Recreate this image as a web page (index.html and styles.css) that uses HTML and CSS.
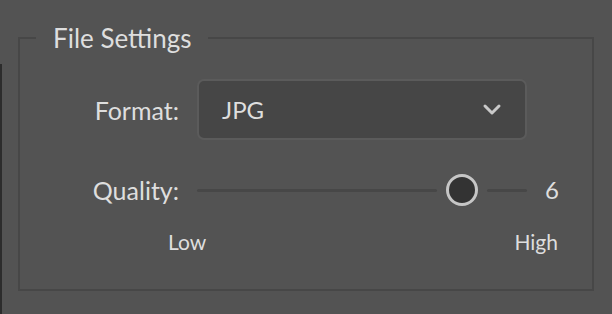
FILE: index.html
```html
<!DOCTYPE html>
<html lang="en">
<head>
    <meta charset="UTF-8">
    <meta name="viewport" content="width=device-width, initial-scale=1.0">
    <title>File Settings</title>
    <link rel="stylesheet" href="styles.css">
</head>
<body>

    <div class="edge"></div>

    <fieldset class="settings">
        <legend>File Settings</legend>

        <div class="rows">
            <div class="row row-format">
                <label class="label">Format:</label>
                <div class="select">
                    <span>JPG</span>
                    <svg class="chevron" width="20" height="14" viewBox="0 0 20 14">
                        <polyline points="3,3 10,10 17,3" fill="none" stroke="#c9c9c9" stroke-width="3" stroke-linecap="round" stroke-linejoin="round"/>
                    </svg>
                </div>
            </div>

            <div class="row row-quality">
                <label class="label">Quality:</label>
                <div class="slider">
                    <div class="track track-low"></div>
                    <div class="thumb"></div>
                    <div class="track track-high"></div>
                </div>
                <span class="value">6</span>
            </div>

            <div class="scale">
                <span>Low</span>
                <span>High</span>
            </div>
        </div>
    </fieldset>

</body>
</html>
```

FILE: styles.css
```css
body {
    margin: 0;
    height: 314px;
    overflow: hidden;
    display: flex;
    align-items: flex-start;
    background-color: #535353;
    color: #dedede;
    font-family: Lato, "Open Sans", sans-serif;
}
.edge {
    width: 2px;
    height: 250px;
    margin-top: 64px;
    background-color: #2c2c2c;
}
.settings {
    box-sizing: border-box;
    width: 576px;
    min-width: 0;
    margin: 22px 0 0 16px;
    padding: 0;
    border: 2px solid #474747;
}
.settings legend {
    margin-left: 16px;
    padding: 0 16px 0 17px;
    font-size: 26px;
    line-height: 32px;
}
.rows {
    padding: 25px 0 34px 72px;
}
.row {
    display: flex;
    align-items: center;
    gap: 18px;
}
.label {
    width: 87px;
    text-align: right;
    font-size: 25px;
    line-height: 30px;
}
.row-format {
    height: 61px;
}
.select {
    box-sizing: border-box;
    width: 330px;
    height: 61px;
    display: flex;
    align-items: center;
    justify-content: space-between;
    padding: 0 23px 0 23px;
    background-color: #464646;
    border: 2px solid #5b5b5b;
    border-radius: 7px;
    font-size: 24px;
    line-height: 30px;
}
.chevron {
    display: block;
}
.row-quality {
    height: 40px;
    margin-top: 30px;
}
.slider {
    width: 330px;
    display: flex;
    align-items: center;
    gap: 9px;
}
.track {
    height: 3px;
    border-radius: 2px;
    background-color: #474747;
}
.track-low {
    flex: 1;
}
.track-high {
    width: 40px;
}
.thumb {
    box-sizing: border-box;
    width: 32px;
    height: 32px;
    border-radius: 50%;
    border: 3px solid #c6c6c6;
    background-color: #333333;
}
.value {
    font-size: 24px;
    line-height: 30px;
}
.scale {
    display: flex;
    justify-content: space-between;
    width: 390px;
    margin: 19px 0 0 76px;
    font-size: 21px;
    line-height: 26px;
}
```
